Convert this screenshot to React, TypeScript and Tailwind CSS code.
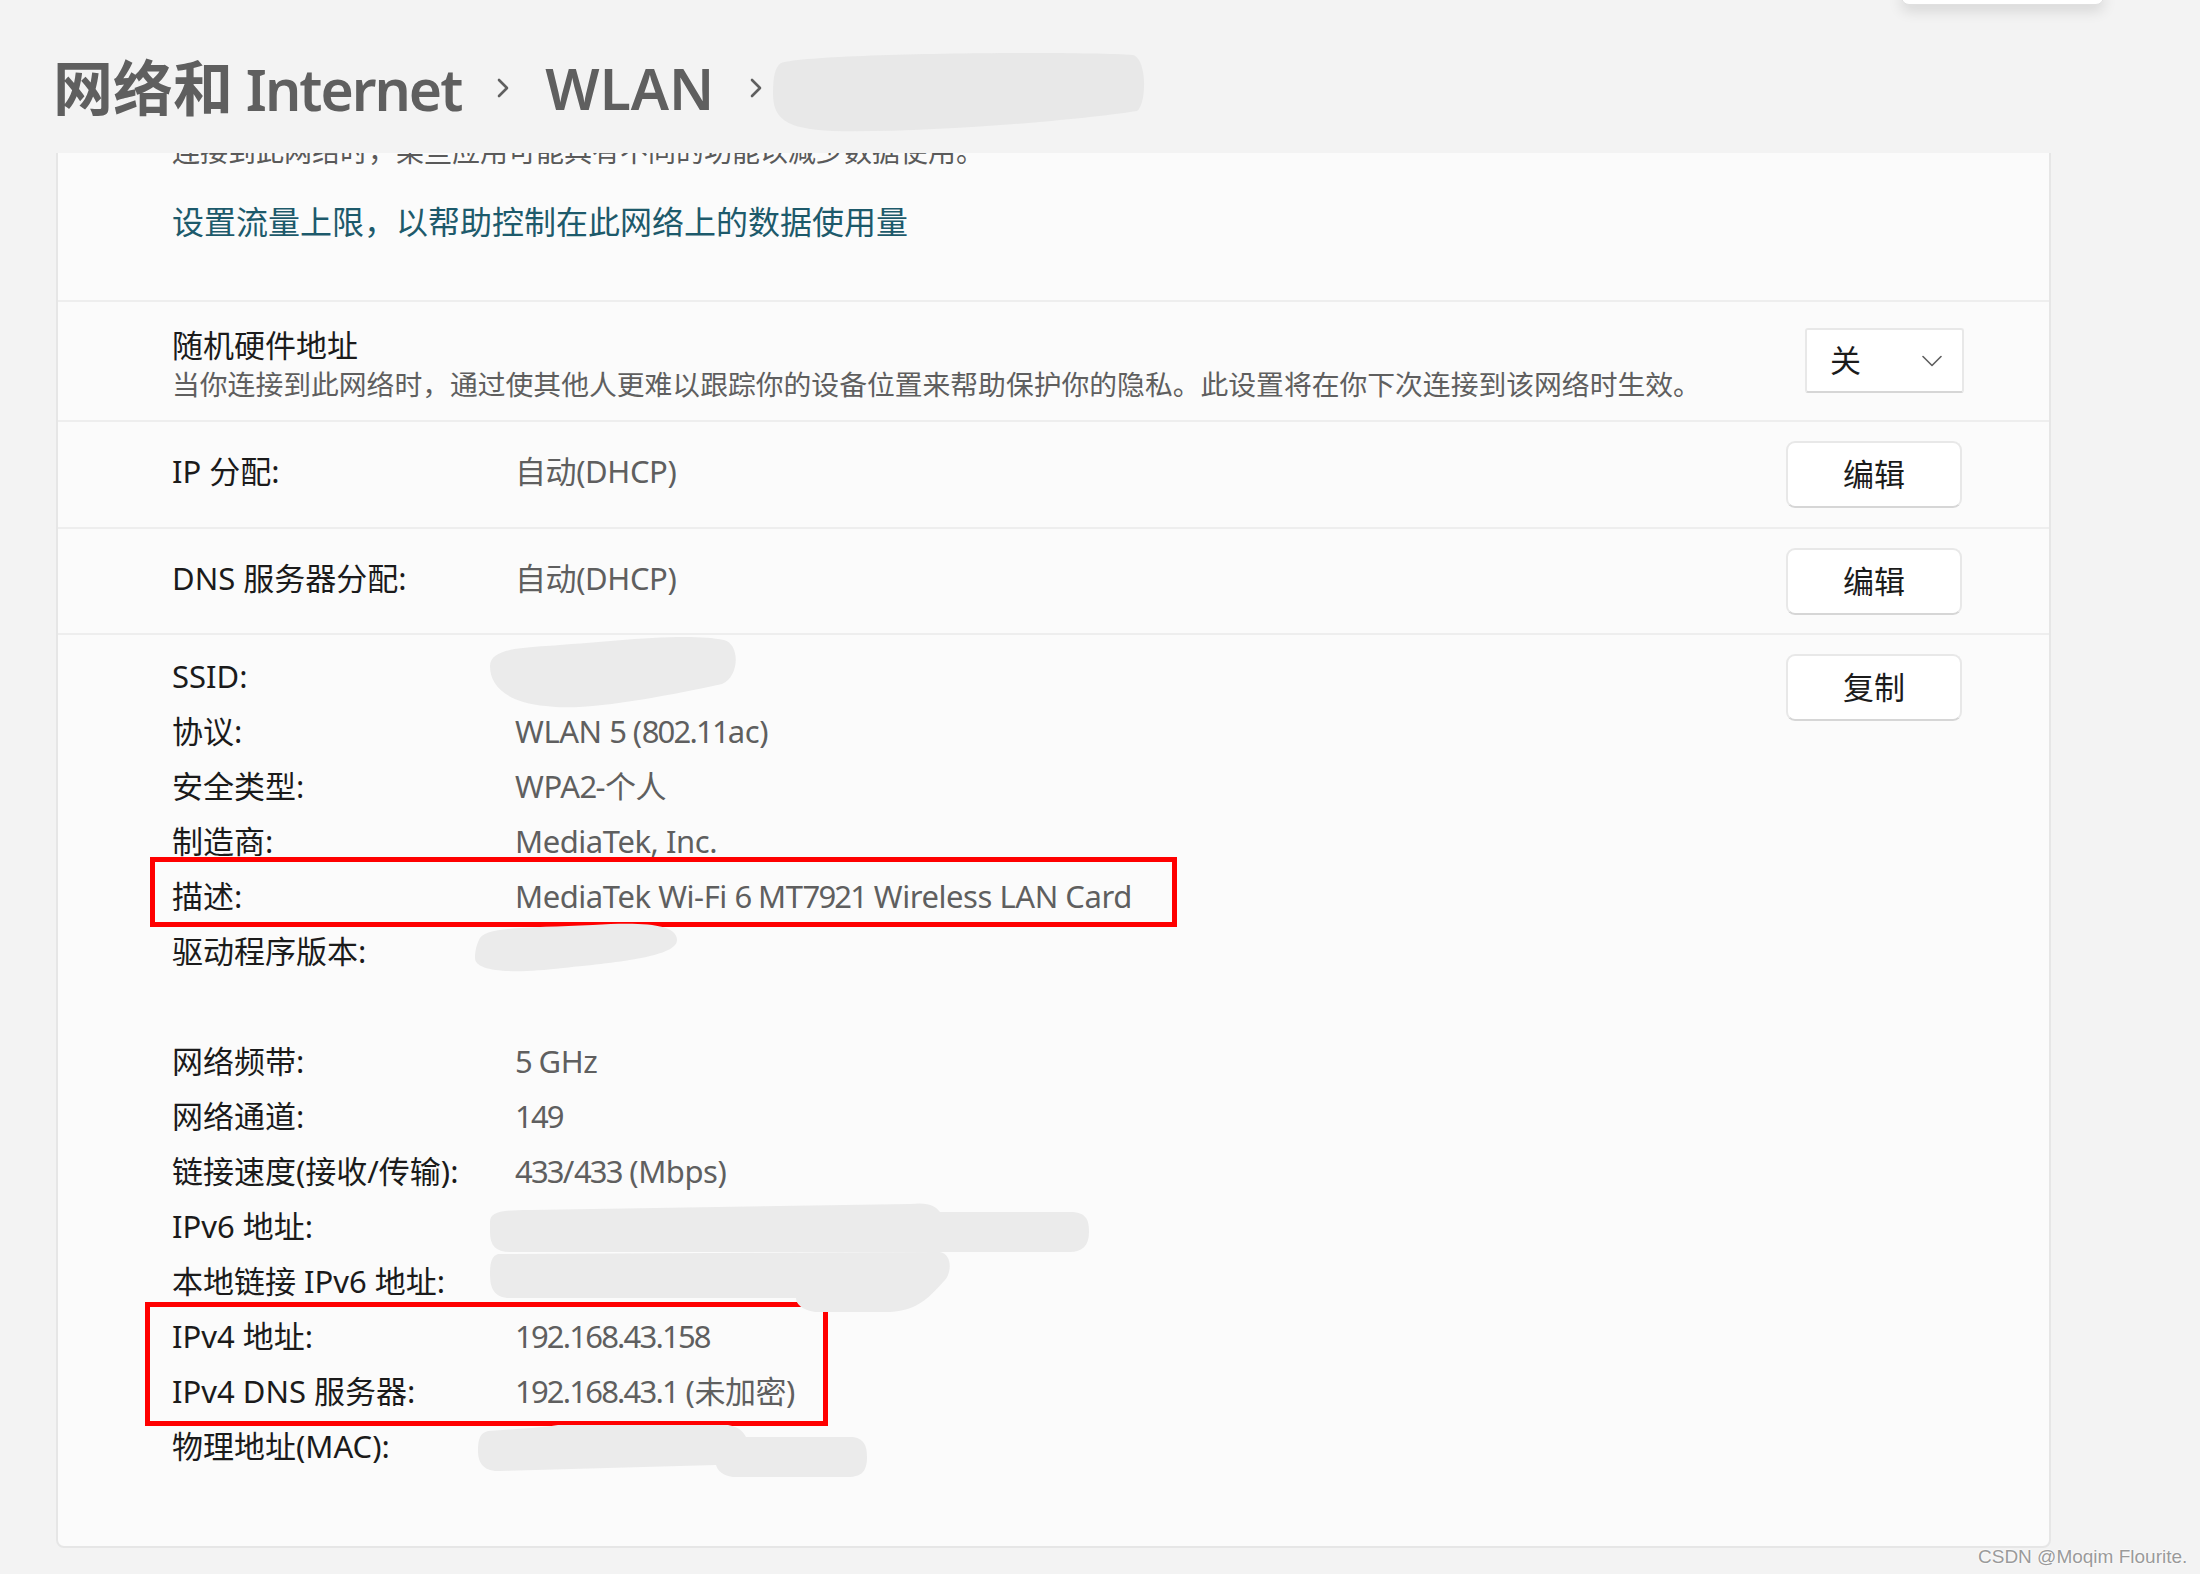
import React from "react";

const details: [string, string][] = [
  ["SSID:", ""],
  ["协议:", "WLAN 5 (802.11ac)"],
  ["安全类型:", "WPA2-个人"],
  ["制造商:", "MediaTek, Inc."],
  ["描述:", "MediaTek Wi-Fi 6 MT7921 Wireless LAN Card"],
  ["驱动程序版本:", ""],
  ["", ""],
  ["网络频带:", "5 GHz"],
  ["网络通道:", "149"],
  ["链接速度(接收/传输):", "433/433 (Mbps)"],
  ["IPv6 地址:", ""],
  ["本地链接 IPv6 地址:", ""],
  ["IPv4 地址:", "192.168.43.158"],
  ["IPv4 DNS 服务器:", "192.168.43.1 (未加密)"],
  ["物理地址(MAC):", ""],
];

// redaction scribbles, page coordinates
const blobs = [
  { x: 773, y: 53, w: 372, h: 79, fill: "#e8e8e8", d: "M 8 10 C 40 0, 300 -2, 360 2 C 374 6, 374 50, 364 58 C 300 68, 150 80, 60 78 C 10 76, 0 64, 0 40 C 0 24, 2 14, 8 10 Z" },
  { x: 486, y: 636, w: 252, h: 72, fill: "#ebebeb", d: "M 4 30 C 4 14, 30 12, 60 10 C 120 6, 200 -4, 238 4 C 254 8, 254 40, 236 48 C 180 60, 100 76, 60 70 C 20 66, 4 50, 4 30 Z" },
  { x: 473, y: 922, w: 204, h: 51, fill: "#ebebeb", d: "M 6 18 C 10 4, 60 6, 120 3 C 170 0, 204 2, 204 18 C 204 34, 150 40, 90 46 C 40 52, 2 50, 2 36 C 2 28, 4 22, 6 18 Z" },
  { x: 490, y: 1202, w: 599, h: 51, fill: "#ebebeb", d: "M 0 20 C 0 10, 10 8, 40 8 L 420 2 C 440 0, 445 4, 450 10 L 580 10 C 598 10, 599 20, 599 30 C 599 44, 592 50, 580 50 L 20 50 C 6 50, 0 44, 0 30 Z" },
  { x: 490, y: 1252, w: 461, h: 60, fill: "#ebebeb", d: "M 8 2 L 450 0 C 462 2, 462 20, 455 28 C 440 44, 430 58, 400 60 L 325 60 C 312 58, 306 52, 306 46 L 20 46 C 4 46, 0 36, 0 22 C 0 10, 2 4, 8 2 Z" },
  { x: 478, y: 1425, w: 389, h: 52, fill: "#ebebeb", d: "M 10 6 C 40 4, 70 2, 80 0 L 250 0 C 262 2, 266 8, 268 12 L 375 12 C 388 14, 389 24, 389 32 C 389 46, 384 52, 370 52 L 255 52 C 244 50, 240 46, 238 40 L 20 46 C 4 46, 0 36, 0 26 C 0 14, 2 8, 10 6 Z" },
];

// the reference font has narrow digits, so runs of digits are tightened
const Val = ({ text }: { text: string }) => (
  <>
    {text.split(/([0-9.]+)/).map((part, i) =>
      /^[0-9.]+$/.test(part) ? (
        <span key={i} className="tracking-[-1.8px]">
          {part}
        </span>
      ) : (
        <span key={i}>{part}</span>
      )
    )}
  </>
);

const Chevron = () => (
  <svg width="12" height="20" viewBox="0 0 12 20" fill="none">
    <path d="M2 2 L10 10 L2 18" stroke="#5f5f5f" strokeWidth="2.6" strokeLinecap="round" strokeLinejoin="round" />
  </svg>
);

const Button = ({ children }: { children: React.ReactNode }) => (
  <button className="w-[176px] h-[67px] rounded-[9px] bg-white border-2 border-[#e8e8e8] border-b-[#d6d6d6] text-[31px] text-[#1b1b1b] flex items-center justify-center">
    {children}
  </button>
);

export default function App() {
  return (
    <div className="relative w-[2200px] h-[1574px] overflow-hidden bg-[#f3f3f3] font-['Noto_Sans','Noto_Sans_CJK_SC',sans-serif]">
      {/* header */}
      <div className="h-[153px] pt-[23px] pl-[53px] flex items-center gap-[36px] font-semibold text-[#5f5f5f] leading-none">
        <span className="text-[60px]">
          网络和<span className="text-[57px] tracking-[-2px]"> Internet</span>
        </span>
        <Chevron />
        <span className="text-[57px]">WLAN</span>
        <Chevron />
      </div>

      {/* scrolled content */}
      <div className="h-[1421px] overflow-hidden pl-[56px]">
        <div className="w-[1995px] -mt-[24px] bg-[#fbfbfb] border-2 border-[#e6e6e6] rounded-[8px]">
          <div className="h-[169px] pl-[114px]">
            <p className="text-[28px] leading-[40px] text-[#5a5a5a]">连接到此网络时，某些应用可能具有不同的功能以减少数据使用。</p>
            <p className="mt-[29px] text-[32px] leading-[44px] text-[#1d5a6b]">设置流量上限，以帮助控制在此网络上的数据使用量</p>
          </div>

          <div className="h-[120px] border-t-2 border-[#eeeeee] pl-[114px] pr-[85px] pt-[23px] flex items-start justify-between">
            <div>
              <p className="text-[31px] leading-[40px] text-[#1b1b1b]">随机硬件地址</p>
              <p className="text-[27.8px] leading-[38px] text-[#5f5f5f]">当你连接到此网络时，通过使其他人更难以跟踪你的设备位置来帮助保护你的隐私。此设置将在你下次连接到该网络时生效。</p>
            </div>
            <div className="mt-[3px] w-[159px] h-[65px] rounded-[3px] bg-white border-2 border-[#e8e8e8] border-b-[#d6d6d6] pl-[23px] pr-[20px] flex items-center justify-between">
              <span className="text-[31px] text-[#1b1b1b]">关</span>
              <svg width="20" height="12" viewBox="0 0 20 12" fill="none">
                <path d="M1 1.5 L10 10.5 L19 1.5" stroke="#5f5f5f" strokeWidth="1.6" strokeLinecap="round" strokeLinejoin="round" />
              </svg>
            </div>
          </div>

          <div className="h-[107px] border-t-2 border-[#eeeeee] pl-[114px] pr-[87px] flex items-center justify-between">
            <div className="mb-[6px] grid grid-cols-[343px_1fr] text-[31px]">
              <span className="text-[#1b1b1b]">IP 分配:</span>
              <span className="text-[#5f5f5f] tracking-[-0.4px]">自动(DHCP)</span>
            </div>
            <Button>编辑</Button>
          </div>

          <div className="h-[106px] border-t-2 border-[#eeeeee] pl-[114px] pr-[87px] flex items-center justify-between">
            <div className="mb-[6px] grid grid-cols-[343px_1fr] text-[31px]">
              <span className="text-[#1b1b1b]">DNS 服务器分配:</span>
              <span className="text-[#5f5f5f] tracking-[-0.4px]">自动(DHCP)</span>
            </div>
            <Button>编辑</Button>
          </div>

          <div className="border-t-2 border-[#eeeeee] pl-[114px] pr-[87px] pt-[14px] pb-[72px] flex items-start justify-between">
            <div className="grid grid-cols-[343px_1fr] text-[31px] leading-[55px]">
              {details.map(([k, v], i) => (
                <React.Fragment key={i}>
                  <span className="h-[55px] text-[#1b1b1b] whitespace-nowrap">{k}</span>
                  <span className="h-[55px] text-[#5f5f5f] whitespace-nowrap tracking-[-0.45px]">
                    <Val text={v} />
                  </span>
                </React.Fragment>
              ))}
            </div>
            <div className="mt-[5px]">
              <Button>复制</Button>
            </div>
          </div>
        </div>
      </div>

      {/* annotations */}
      <div className="absolute left-[150px] top-[857px] w-[1027px] h-[70px] border-[5px] border-[#ff0000]" />
      <div className="absolute left-[145px] top-[1302px] w-[683px] h-[124px] border-[5px] border-[#ff0000]" />

      {blobs.map((b, i) => (
        <svg
          key={i}
          className="absolute"
          style={{ left: b.x, top: b.y }}
          width={b.w}
          height={b.h}
          viewBox={`0 0 ${b.w} ${b.h}`}
        >
          <path d={b.d} fill={b.fill} />
        </svg>
      ))}

      {/* flyout peeking at top */}
      <div className="absolute left-[1901px] -top-[10px] w-[203px] h-[15px] bg-white border border-[#e0e0e0] rounded-b-[8px] shadow-[0_6px_14px_rgba(0,0,0,0.12)]" />

      <div className="absolute left-[1978px] top-[1543px] text-[19px] text-[#9a9a9a] font-['Liberation_Sans',sans-serif] [text-shadow:0_0_2px_#fff,0_0_2px_#fff]">
        CSDN @Moqim Flourite.
      </div>
    </div>
  );
}
